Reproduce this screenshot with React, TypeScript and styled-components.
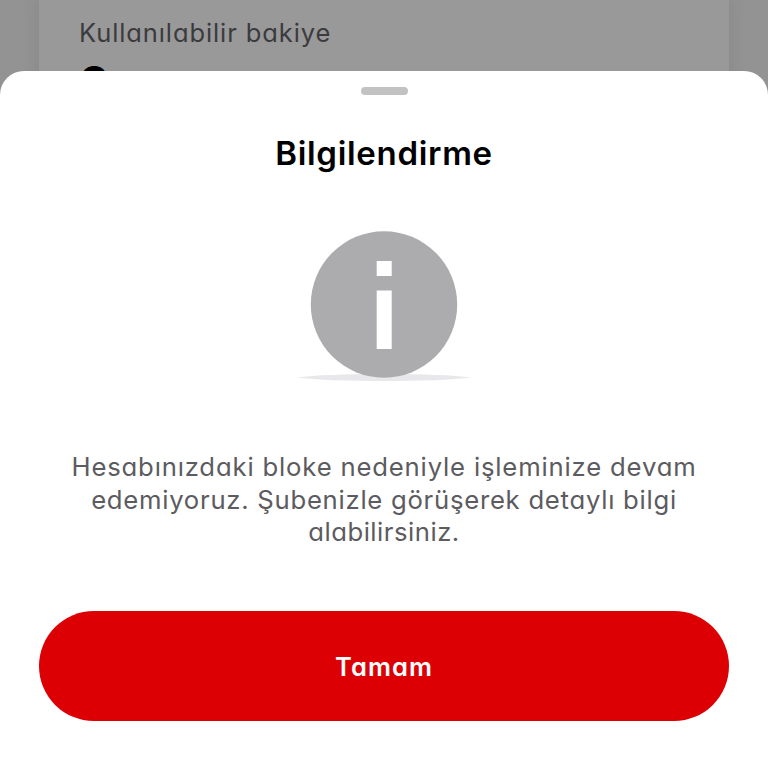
import React from 'react';
import styled, { createGlobalStyle } from 'styled-components';

const GlobalStyle = createGlobalStyle`
  *, *::before, *::after { box-sizing: border-box; }
  body { margin: 0; background: #fff; }
`;

const Screen = styled.div`
  position: relative;
  width: 768px;
  height: 768px;
  overflow: hidden;
  padding: 0 39px;
  background: #939393;
  font-family: Inter, 'Open Sans', sans-serif;
  font-feature-settings: 'cv11' 1;
`;

const AccountCard = styled.section`
  height: 160px;
  padding: 17px 40px 0;
  background: #999;
  box-shadow: 0 0 16px 2px rgba(0, 0, 0, 0.07);
`;

const BalanceLabel = styled.div`
  font-size: 25.5px;
  line-height: 32px;
  letter-spacing: 0.9px;
  color: #3b3b3e;
  white-space: nowrap;
`;

const Balance = styled.div`
  margin: 7px 0 0;
  font-size: 44px;
  line-height: 52px;
  font-weight: 800;
  color: #000;
`;

const Sheet = styled.section`
  position: absolute;
  inset: 71px 0 0;
  display: flex;
  flex-direction: column;
  align-items: center;
  padding: 16px 39px 0;
  border-radius: 24px 24px 0 0;
  background: #fff;
`;

const Handle = styled.div`
  width: 47px;
  height: 8px;
  border-radius: 4px;
  background: #c2c2c2;
`;

const Title = styled.h1`
  margin: 38px 0 0;
  font-size: 33px;
  line-height: 40px;
  font-weight: 600;
  letter-spacing: 0.7px;
  color: #000;
`;

const InfoIcon = styled.svg`
  display: block;
  width: 176px;
  height: 152px;
  margin-top: 56px;
`;

const Message = styled.p`
  display: flex;
  flex-direction: column;
  align-items: center;
  margin: 70px 0 0;
  font-size: 25.7px;
  line-height: 32.7px;
  color: #5c5b60;
  white-space: nowrap;
`;

const Line = styled.span<{ $spacing: number }>`
  letter-spacing: ${({ $spacing }) => $spacing}px;
`;

const ConfirmButton = styled.button`
  width: 690px;
  height: 110px;
  margin-top: 62px;
  padding: 0;
  border: 0;
  border-radius: 55px;
  background: #dc0005;
  color: #fff;
  font: inherit;
  font-feature-settings: inherit;
  font-size: 25.5px;
  font-weight: 600;
  letter-spacing: 1.1px;
`;

export default function App() {
  return (
    <>
      <GlobalStyle />
      <Screen lang="tr">
        <AccountCard>
          <BalanceLabel>Kullanılabilir bakiye</BalanceLabel>
          <Balance>0</Balance>
        </AccountCard>
        <Sheet role="dialog" aria-label="Bilgilendirme">
          <Handle />
          <Title>Bilgilendirme</Title>
          <InfoIcon viewBox="0 0 176 152" aria-hidden="true">
            <path d="M0 148.5Q30 145 88 145T176 148.5Q145 152 88 152T0 148.5Z" fill="#e8e8ea" />
            <circle cx="88" cy="75.5" r="73.2" fill="#acacae" />
            <rect x="80.7" y="32" width="15" height="15" fill="#fff" />
            <rect x="80.7" y="61.5" width="15" height="58.5" fill="#fff" />
          </InfoIcon>
          <Message>
            <Line $spacing={0.82}>Hesabınızdaki bloke nedeniyle işleminize devam</Line>
            <Line $spacing={0.73}>edemiyoruz. Şubenizle görüşerek detaylı bilgi</Line>
            <Line $spacing={0.5}>alabilirsiniz.</Line>
          </Message>
          <ConfirmButton type="button">Tamam</ConfirmButton>
        </Sheet>
      </Screen>
    </>
  );
}
